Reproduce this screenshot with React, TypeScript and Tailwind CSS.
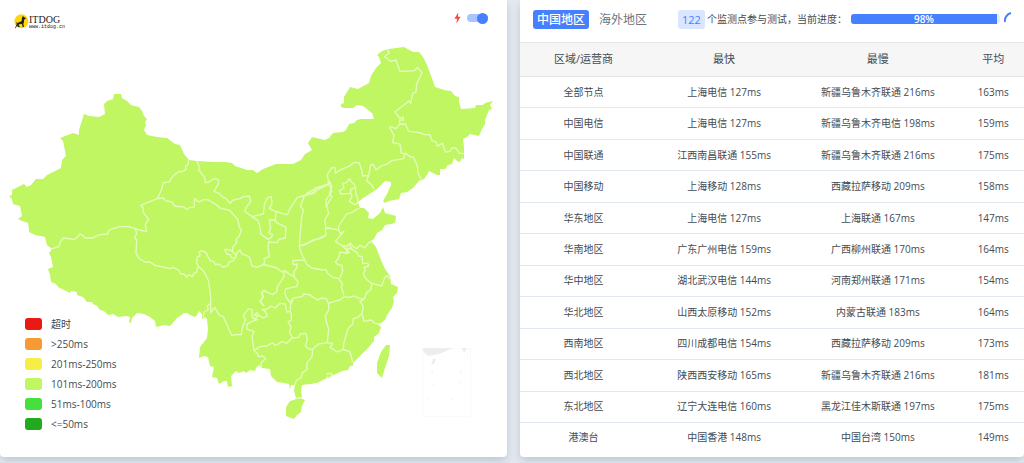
import { useState } from "react";

type Region = "cn" | "overseas";

type NodeRow = {
  area: string;
  fastest: string;
  slowest: string;
  average: string;
};

const rows: NodeRow[] = [
  { area: "全部节点", fastest: "上海电信 127ms", slowest: "新疆乌鲁木齐联通 216ms", average: "163ms" },
  { area: "中国电信", fastest: "上海电信 127ms", slowest: "新疆乌鲁木齐电信 198ms", average: "159ms" },
  { area: "中国联通", fastest: "江西南昌联通 155ms", slowest: "新疆乌鲁木齐联通 216ms", average: "175ms" },
  { area: "中国移动", fastest: "上海移动 128ms", slowest: "西藏拉萨移动 209ms", average: "158ms" },
  { area: "华东地区", fastest: "上海电信 127ms", slowest: "上海联通 167ms", average: "147ms" },
  { area: "华南地区", fastest: "广东广州电信 159ms", slowest: "广西柳州联通 170ms", average: "164ms" },
  { area: "华中地区", fastest: "湖北武汉电信 144ms", slowest: "河南郑州联通 171ms", average: "154ms" },
  { area: "华北地区", fastest: "山西太原移动 152ms", slowest: "内蒙古联通 183ms", average: "164ms" },
  { area: "西南地区", fastest: "四川成都电信 154ms", slowest: "西藏拉萨移动 209ms", average: "173ms" },
  { area: "西北地区", fastest: "陕西西安移动 165ms", slowest: "新疆乌鲁木齐联通 216ms", average: "181ms" },
  { area: "东北地区", fastest: "辽宁大连电信 160ms", slowest: "黑龙江佳木斯联通 197ms", average: "175ms" },
  { area: "港澳台", fastest: "中国香港 148ms", slowest: "中国台湾 150ms", average: "149ms" },
];

const legend = [
  { label: "超时", color: "bg-[#e81a12]" },
  { label: ">250ms", color: "bg-[#f79a35]" },
  { label: "201ms-250ms", color: "bg-[#f8ec46]" },
  { label: "101ms-200ms", color: "bg-[#bff662]" },
  { label: "51ms-100ms", color: "bg-[#44e03f]" },
  { label: "<=50ms", color: "bg-[#22aa1e]" },
];

const mainland =
  "114,94 121,94 122,98 127,101 131,105 134,106 139,107 142,111 144,116 147,119 145,122 146,125 144,130 147,135 157,137 167,138 175,144 180,145 184,154 189,160 " +
  "197,161 212,162 225,162 232,163 235,166 247,170 253,170 257,173 263,169 276,164 293,164 301,160 305,154 312,150 308,143 312,137 325,140 329,138 333,133 343,132 346,130 349,124 354,123 357,120 361,119 374,119 " +
  "372,113 363,106 357,105 353,108 344,108 341,107 341,104 344,103 344,97 350,87 358,89 369,83 371,76 376,68 381,63 379,57 377,55 382,51 389,49 404,47 413,52 419,52 423,57 427,65 430,73 433,81 435,87 " +
  "444,90 451,91 455,96 459,97 459,102 461,109 475,108 476,105 483,105 485,103 493,101 490,105 492,109 489,110 485,120 485,124 482,129 479,136 470,134 467,137 463,139 464,147 464,159 462,158 460,162 457,161 454,158 " +
  "452,164 448,165 445,169 440,169 440,175 437,175 429,171 427,175 424,179 419,181 413,188 407,192 401,193 399,199 389,201 385,203 383,201 387,194 391,185 391,182 385,181 377,189 371,193 363,198 358,202 " +
  "360,208 364,208 369,213 368,218 373,219 380,213 383,207 385,213 396,216 395,223 391,224 385,225 382,230 377,233 374,239 371,241 376,247 381,260 385,269 390,276 391,284 398,287 397,293 393,297 394,301 " +
  "392,308 387,315 385,320 381,323 378,324 381,327 379,333 374,337 374,341 368,348 363,353 357,359 353,363 353,366 350,366 348,370 342,371 336,374 331,376 327,378 321,381 317,383 310,384 302,385 301,391 302,397 " +
  "296,398 294,391 295,385 291,385 290,389 289,384 284,383 277,382 271,376 270,369 262,368 259,365 256,368 255,371 250,370 246,373 244,371 239,373 236,371 231,376 232,386 228,387 227,381 224,381 219,384 217,378 212,377 214,367 " +
  "210,366 208,357 204,356 199,358 200,347 204,342 207,338 208,329 207,319 205,317 202,319 202,314 199,311 197,315 195,317 190,315 187,313 184,313 177,318 170,326 164,325 156,327 155,321 150,317 144,314 137,313 132,318 131,323 129,322 130,317 " +
  "126,316 118,317 113,314 108,315 104,311 100,310 97,306 93,304 92,302 87,302 83,297 77,295 77,292 71,291 70,293 58,287 56,284 51,282 50,275 48,269 53,267 51,257 49,253 52,249 47,245 45,237 35,235 29,232 29,229 " +
  "28,223 22,221 18,219 22,216 20,206 13,204 12,199 9,196 12,195 12,190 20,186 24,184 27,187 31,185 36,179 43,179 47,175 61,168 62,160 66,156 63,141 60,138 73,133 79,135 79,130 84,114 89,116 99,117 105,114 104,104 107,101 113,99";

// Province borders, drawn on a grid three times finer than the map. Grouped by the corner they start from.
const borders = [
  {
    transform: "translate(0 80) scale(.3333)",
    d: "M566,240 564,254 556,258 558,268 546,276 538,274 524,284 512,298 508,306 490,308 484,330 472,356 422,376 430,384 430,398 446,418 436,434 440,454 418,450 406,446 386,440 358,440 328,450 322,462 298,464 278,474 256,474 248,466 240,462 232,472 222,478 190,474 182,484 176,500 150,508",
  },
  {
    transform: "translate(130 140) scale(.3333)",
    d:
      "M82,176 100,174 106,182 126,186 134,198 144,200 158,200 172,208 180,202 192,202 194,176 206,186 222,178 236,180 262,196 270,204 300,212 312,226 322,236 328,260 334,272 326,292 318,298 320,308 308,322 308,336 318,344 316,354" +
      "M16,266 20,280 14,294 20,300 18,340 28,356 45,366 60,366 75,376 105,382 120,386 130,382 145,390 152,402 162,402 170,412 176,404 188,410 192,400 200,396 202,384 206,380" +
      "M206,380 200,370 202,350 210,348 208,336 215,332 228,338 240,362 252,366 256,374 266,372 280,382 294,376 298,366 310,362 316,354 304,352 300,344 290,342 284,328 300,330 308,336" +
      "M316,354 322,338 330,330 336,342 358,350 366,378 380,382 400,374 420,378 440,384 456,396 464,392 480,404 492,410" +
      "M200,62 208,80 206,88 214,100 224,112 226,128 236,126 252,116 264,118 266,130 258,144 252,154 268,160 276,170 288,176 300,190 310,180 330,176 340,170 358,168 362,184 350,200 344,214 366,230 400,222 404,190 414,172 424,170 426,190 418,206 438,214" +
      "M366,230 384,242 390,262 392,282 414,298 424,292 428,284 416,278 422,264 418,240 436,240 438,214 456,220 472,224 480,206 502,172 524,166 534,158 548,160 556,144 574,140 590,134 600,128" +
      "M436,240 440,248 468,262 466,294 446,298 442,308 416,306 414,320 418,350 402,356 404,368 396,378" +
      "M524,166 516,186 512,200 520,210 514,240 508,318 530,312 548,300 570,296 588,286 586,266 600,262" +
      "M508,318 514,340 524,360 488,362 490,374 502,372 500,384 492,394 492,410 504,426 500,440 468,446 464,458 470,474 482,490" +
      "M462,394 462,410 452,426 442,440 440,456 428,464 400,452 394,460 400,472 390,484 402,498" +
      "M206,380 218,390 226,402 236,424 242,470 242,490 232,498 234,510 222,516 220,530",
  },
  {
    transform: "translate(180 240) scale(.3333)",
    d:
      "M92,190 92,218 104,202 118,226 130,230 156,288 164,284 184,284 186,266 196,240 190,226 206,206 216,210 216,230 224,238 234,228 222,226 230,218 236,226 250,234 262,228 256,214 246,208 260,208 274,198 286,204 300,190 316,192 320,216 332,214" +
      "M252,198 240,182 250,172 246,156 256,150" +
      "M234,238 212,246 200,254 202,268 222,274 216,290 222,332" +
      "M334,178 330,214 334,222 334,240 324,246 334,262 328,276 338,294" +
      "M222,332 240,320 260,318 278,308 284,316 296,312 306,304 320,310 336,294 356,292 360,282 378,280 382,300 376,318 388,328 398,328" +
      "M222,332 232,340 236,350 250,348 256,356 244,368 244,382" +
      "M398,328 396,350 380,370 382,388 368,398 362,414 350,420 344,436" +
      "M334,190 340,174 366,170 370,162 388,164 400,172 414,180 424,174 438,176 446,190 470,182 480,180 492,170 508,172 522,168 540,176 552,178 560,158 572,150 576,130 606,138" +
      "M446,190 446,210 436,228 440,250 446,266 442,308 416,312 398,328" +
      "M442,308 458,310 450,322 472,336 490,328 492,308 504,266 518,252 520,236 534,232 546,220 550,200 540,184 552,178" +
      "M490,328 510,336 518,366" +
      "M546,220 552,244 574,240 584,250 604,252" +
      "M576,130 566,124 554,112 550,100 556,92 552,82 566,78 564,70 548,70 546,50 536,48 532,38 516,28 508,14" +
      "M606,138 610,124 616,110 624,108 628,118" +
      "M504,22 500,40 480,36 476,54 466,66 474,74 486,76 488,94 480,114" +
      "M440,404 446,400 456,402 454,410 446,414 440,410" +
      "M346,476 366,472",
  },
  {
    transform: "translate(270 180) scale(.3333)",
    d:
      "M104,240 110,252 124,264 160,270 168,268 172,280 188,292 206,296 218,312 214,320 222,346" +
      "M176,0 186,20 178,40 186,50 170,76 176,100 164,120 168,146 184,146 206,150 206,138 218,120 230,102 244,98 268,84" +
      "M106,46 132,40 144,28 170,16 180,8" +
      "M206,150 210,160 222,154 196,184 218,198 230,198 242,190 250,200 260,206 270,196 284,204 296,188 304,186" +
      "M90,198 130,182 168,166M218,198 238,218 228,220 232,204 244,208",
  },
  {
    transform: "translate(300 30) scale(.3333)",
    d:
      "M148,446 154,456 162,462 166,472 152,478 152,490 122,492 118,482 132,474 128,460 140,458 148,446M152,490 156,500 148,514 164,524 172,520 174,506 168,492 166,472" +
      "M86,462 82,434 96,412 106,414 106,430 120,420 150,408 160,398 178,398 182,412 186,424 188,438 206,436 200,452 216,466 222,478" +
      "M206,436 212,404 220,404 228,420 240,410 262,402 276,392 310,386 316,370 304,370 300,342 278,338 282,316 268,290" +
      "M0,500 16,496 30,484 50,474 70,468 86,462 96,484 78,510 78,530" +
      "M316,370 334,382 340,380 352,408 354,430 364,448" +
      "M268,296 272,290 288,296 300,282 316,282 326,304 360,308 372,314 390,314 396,332 408,336 412,348 428,340 436,366 450,364 456,354 468,354 478,370 491,370" +
      "M300,282 298,270 310,270 310,262 300,264 284,246 328,212 332,222 338,190 348,186 350,162 366,128 352,112 344,122 300,124 288,90 272,94 254,80 268,68 262,58",
  },
];

function LatencyMap() {
  return (
    <svg
      viewBox="0 0 507 457"
      preserveAspectRatio="xMinYMin meet"
      className="col-start-1 row-start-1 h-full w-full"
      role="img"
      aria-label="中国地区"
    >
      <g fill="#bff662">
        <polygon points={mainland} />
        <polygon points="286,407 290,401 300,398 305,400 302,406 301,412 297,415 294,419 291,418 286,416" />
        <polygon points="386,345 390,345 389,356 385,368 382,378 377,373 377,363 381,352" />
      </g>
      <g fill="none" stroke="#e6fbbf" strokeWidth="4" strokeLinejoin="round">
        {borders.map((border) => (
          <path key={border.transform} transform={border.transform} d={border.d} />
        ))}
      </g>
      <rect x="422.5" y="348.5" width="48" height="68" fill="none" stroke="#fafafa" />
      <g fill="#ebeeed">
        <path d="M423,348H453L439,354 428,356 423,351ZM462,348H467L464,353ZM433,359H436L434,364H431Z" />
        <path
          d="M461,369V374M461,381 459,385M453,398 451,401M435,383 433,386M432,370V374M468,354 466,356M428,397V399M441,408V409"
          stroke="#f0f2f1"
        />
      </g>
    </svg>
  );
}

function Logo() {
  return (
    <a href="/" className="flex items-center text-[#222]">
      <svg viewBox="0 0 45 45" className="h-[15px] w-[15px]" aria-hidden="true">
        <circle cx="22" cy="22" r="21" fill="#ffd60a" />
        <path
          d="M3,43 8,31 7,23 10,27 23,21 24,11 27,5 29,9 36,12 33,16 30,17 30,25 28,29 30,39 26,39 24,30 15,31 14,34 18,39 13,39 9,35 5,43Z"
          fill="#222"
        />
      </svg>
      <span className="flex flex-col font-['Liberation_Serif',serif]">
        <span className="text-[10px] leading-[10px]">ITDOG</span>
        <span className="font-['Liberation_Mono',monospace] text-[5px] leading-[4px]">www.itdog.cn</span>
      </span>
    </a>
  );
}

export default function App() {
  const [region, setRegion] = useState<Region>("cn");
  const [fastMode, setFastMode] = useState(true);
  const progress = 98;

  const tabClass = (value: Region) =>
    region === value
      ? "h-[19px] rounded-[3px] bg-[#467fff] px-1 text-xs leading-[19px] font-medium text-white"
      : "h-[19px] rounded-[3px] px-1 text-xs leading-[19px] text-[#6c757d]";

  return (
    <main className="grid h-screen grid-cols-[507fr_504fr] gap-[13px] bg-[#e6eaf1] pb-1.5 font-['Open_Sans','Noto_Sans_CJK_SC',sans-serif] text-[10px] text-[#444b52]">
      <section className="grid min-h-0 grid-cols-1 grid-rows-1 rounded-b-[4px] bg-white shadow-[0_4px_10px_#bcc6d2]">
        <LatencyMap />
        <div className="z-10 col-start-1 row-start-1 flex flex-col justify-between">
          <div className="flex items-start justify-between pt-3 pr-[19px] pl-3.5">
            <div className="pt-0.5">
              <Logo />
            </div>
            <label className="flex items-center gap-1.5">
              <svg viewBox="0 0 18 30" className="h-3 w-[7px]" aria-hidden="true">
                <path d="M11,1 1,17H8L6,29 17,12H10Z" fill="#f5473e" />
              </svg>
              <input
                type="checkbox"
                aria-label="极速模式"
                checked={fastMode}
                onChange={(e) => setFastMode(e.target.checked)}
                className="flex h-2 w-[21px] appearance-none items-center rounded-full bg-[#a9c5ff] after:size-[11px] after:shrink-0 after:rounded-full after:bg-[#467fff] checked:justify-end"
              />
            </label>
          </div>
          <ul className="flex flex-col gap-1 pb-[25px] pl-[25px]">
            {legend.map((item) => (
              <li key={item.label} className="flex items-center gap-[9px] leading-4">
                <span className={`h-3 w-[17px] rounded-[3px] ${item.color}`} />
                {item.label}
              </li>
            ))}
          </ul>
        </div>
      </section>

      <section className="flex min-h-0 flex-col rounded-b-[4px] bg-white pb-1 shadow-[0_4px_10px_#bcc6d2]">
        <header className="flex h-[42px] shrink-0 items-center pr-1.5 pb-1 pl-[13px] whitespace-nowrap">
          <button type="button" onClick={() => setRegion("cn")} className={tabClass("cn")}>
            中国地区
          </button>
          <button type="button" onClick={() => setRegion("overseas")} className={`ml-1.5 ${tabClass("overseas")}`}>
            海外地区
          </button>
          <span className="ml-[27px] h-[19px] rounded-[3px] bg-[#dae5ff] px-1 text-[11px] leading-[19px] text-[#467fff]">122</span>
          <span className="ml-0.5">个监测点参与测试，当前进度：</span>
          <div
            role="progressbar"
            aria-valuenow={progress}
            aria-label="当前进度"
            className="ml-1 flex h-2.5 flex-1 rounded-[3px] bg-[#e9ecef]"
          >
            <div
              className="flex items-center justify-center rounded-l-[3px] bg-[#467fff] font-semibold text-white"
              style={{ width: `${progress}%` }}
            >
              {progress}%
            </div>
          </div>
          <svg viewBox="0 0 14 14" className="ml-1 size-3.5 shrink-0" aria-hidden="true">
            <path d="M1,10A8,8 0 0 1 7,1" fill="none" stroke="#467fff" strokeWidth="2" />
          </svg>
        </header>

        <div className="min-h-0 flex-1">
          <table className="h-full w-full table-fixed border-collapse text-center">
            <thead className="h-[34px] border-y border-[#e4e7ea] bg-[#f6f6f6] text-[11px]">
              <tr>
                <th className="w-[26%] pr-1 font-normal">区域/运营商</th>
                <th className="w-[29%] font-normal">最快</th>
                <th className="w-[32%] font-normal">最慢</th>
                <th className="w-[13%] pl-1 font-normal">平均</th>
              </tr>
            </thead>
            <tbody className="divide-y divide-[#e1e8ef]">
              {rows.map((row) => (
                <tr key={row.area}>
                  <td className="pr-1">{row.area}</td>
                  <td>{row.fastest}</td>
                  <td>{row.slowest}</td>
                  <td className="pl-1">{row.average}</td>
                </tr>
              ))}
            </tbody>
          </table>
        </div>
      </section>
    </main>
  );
}
